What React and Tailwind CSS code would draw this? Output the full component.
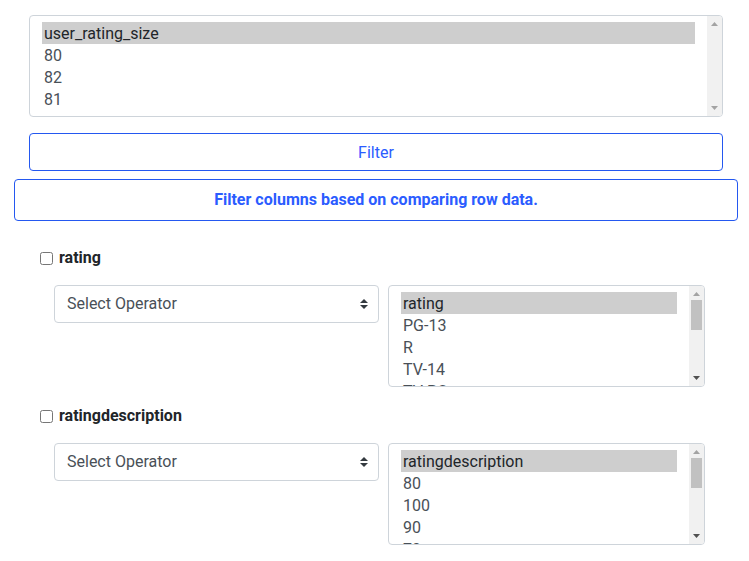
import React from 'react';

const font = { fontFamily: 'Roboto, "Liberation Sans", sans-serif' };

// Barra de scroll dibujada (el navegador no la pinta)
const ScrollBar = ({ thumb }) => (
  <div className="relative w-[15px] h-full bg-[#f1f1f1] shrink-0">
    <svg className="absolute left-[4px] top-[6px]" width="7" height="4" viewBox="0 0 7 4">
      <path d="M3.5 0 L7 4 H0 Z" fill="#a3a3a3" />
    </svg>
    {thumb && <div className="absolute left-[2px] top-[14px] w-[11px] h-[30px] bg-[#c1c1c1]" />}
    <svg className="absolute left-[4px] bottom-[6px]" width="7" height="4" viewBox="0 0 7 4">
      <path d="M0 0 H7 L3.5 4 Z" fill={thumb ? '#505050' : '#a3a3a3'} />
    </svg>
  </div>
);

// Lista con varias filas visibles
const ListBox = ({ options, width, thumb }) => (
  <div className={`flex h-[102px] border border-[#ced4da] rounded bg-white overflow-hidden ${width}`}>
    <div className="flex-1 min-w-0 pl-3 pr-3 pt-1.5 overflow-hidden">
      {options.map((opt, i) => (
        <div
          key={opt}
          className={`h-[22px] leading-[22px] px-0.5 text-base whitespace-nowrap ${
            i === 0 ? 'bg-[#cecece] text-[#212529]' : 'text-[#495057]'
          }`}
        >
          <span className="relative top-px">{opt}</span>
        </div>
      ))}
    </div>
    <ScrollBar thumb={thumb} />
  </div>
);

const OperatorSelect = () => (
  <div className="relative w-[325px]">
    <select className="block w-full h-[38px] appearance-none border border-[#ced4da] rounded bg-white pl-3 pr-8 text-base text-[#495057] outline-none">
      <option>Select Operator</option>
      <option>Equals</option>
      <option>Greater Than</option>
      <option>Less Than</option>
    </select>
    <svg className="absolute right-[11px] top-[14px] pointer-events-none" width="8" height="10" viewBox="0 0 8 10">
      <path d="M4 0 L8 4 H0 Z M4 10 L0 6 H8 Z" fill="#343a40" />
    </svg>
  </div>
);

const ColumnFilter = ({ name, options }) => (
  <div className="flex flex-col">
    <label className="flex items-center gap-[6px] pl-10 h-[24px]">
      <input type="checkbox" className="w-[13px] h-[13px] m-0" />
      <span className="font-bold text-base text-[#212529]">{name}</span>
    </label>
    <div className="flex gap-[9px] pl-[54px] mt-[15px]">
      <OperatorSelect />
      <ListBox options={options} width="w-[317px]" thumb />
    </div>
  </div>
);

export default function App() {
  return (
    <div className="w-[749px] h-[561px] bg-white overflow-hidden" style={font}>
      <div className="pt-[15px] px-[29px]">
        <ListBox options={['user_rating_size', '80', '82', '81']} width="w-[694px]" />
        <button className="block mt-4 w-[694px] h-[38px] border border-[#2458f0] rounded bg-white text-base text-[#2b5cff]">
          <span className="relative top-px">Filter</span>
        </button>
      </div>
      <div className="mt-2 mx-[14px] w-[724px] h-[42px] border border-[#2458f0] rounded flex items-center justify-center">
        <span className="font-bold text-base text-[#2b5cff]">Filter columns based on comparing row data.</span>
      </div>
      <div className="mt-[25px] flex flex-col gap-[17px]">
        <ColumnFilter name="rating" options={['rating', 'PG-13', 'R', 'TV-14', 'TV-PG', 'TV-MA', 'PG']} />
        <ColumnFilter name="ratingdescription" options={['ratingdescription', '80', '100', '90', '70', '82', '81']} />
      </div>
    </div>
  );
}
